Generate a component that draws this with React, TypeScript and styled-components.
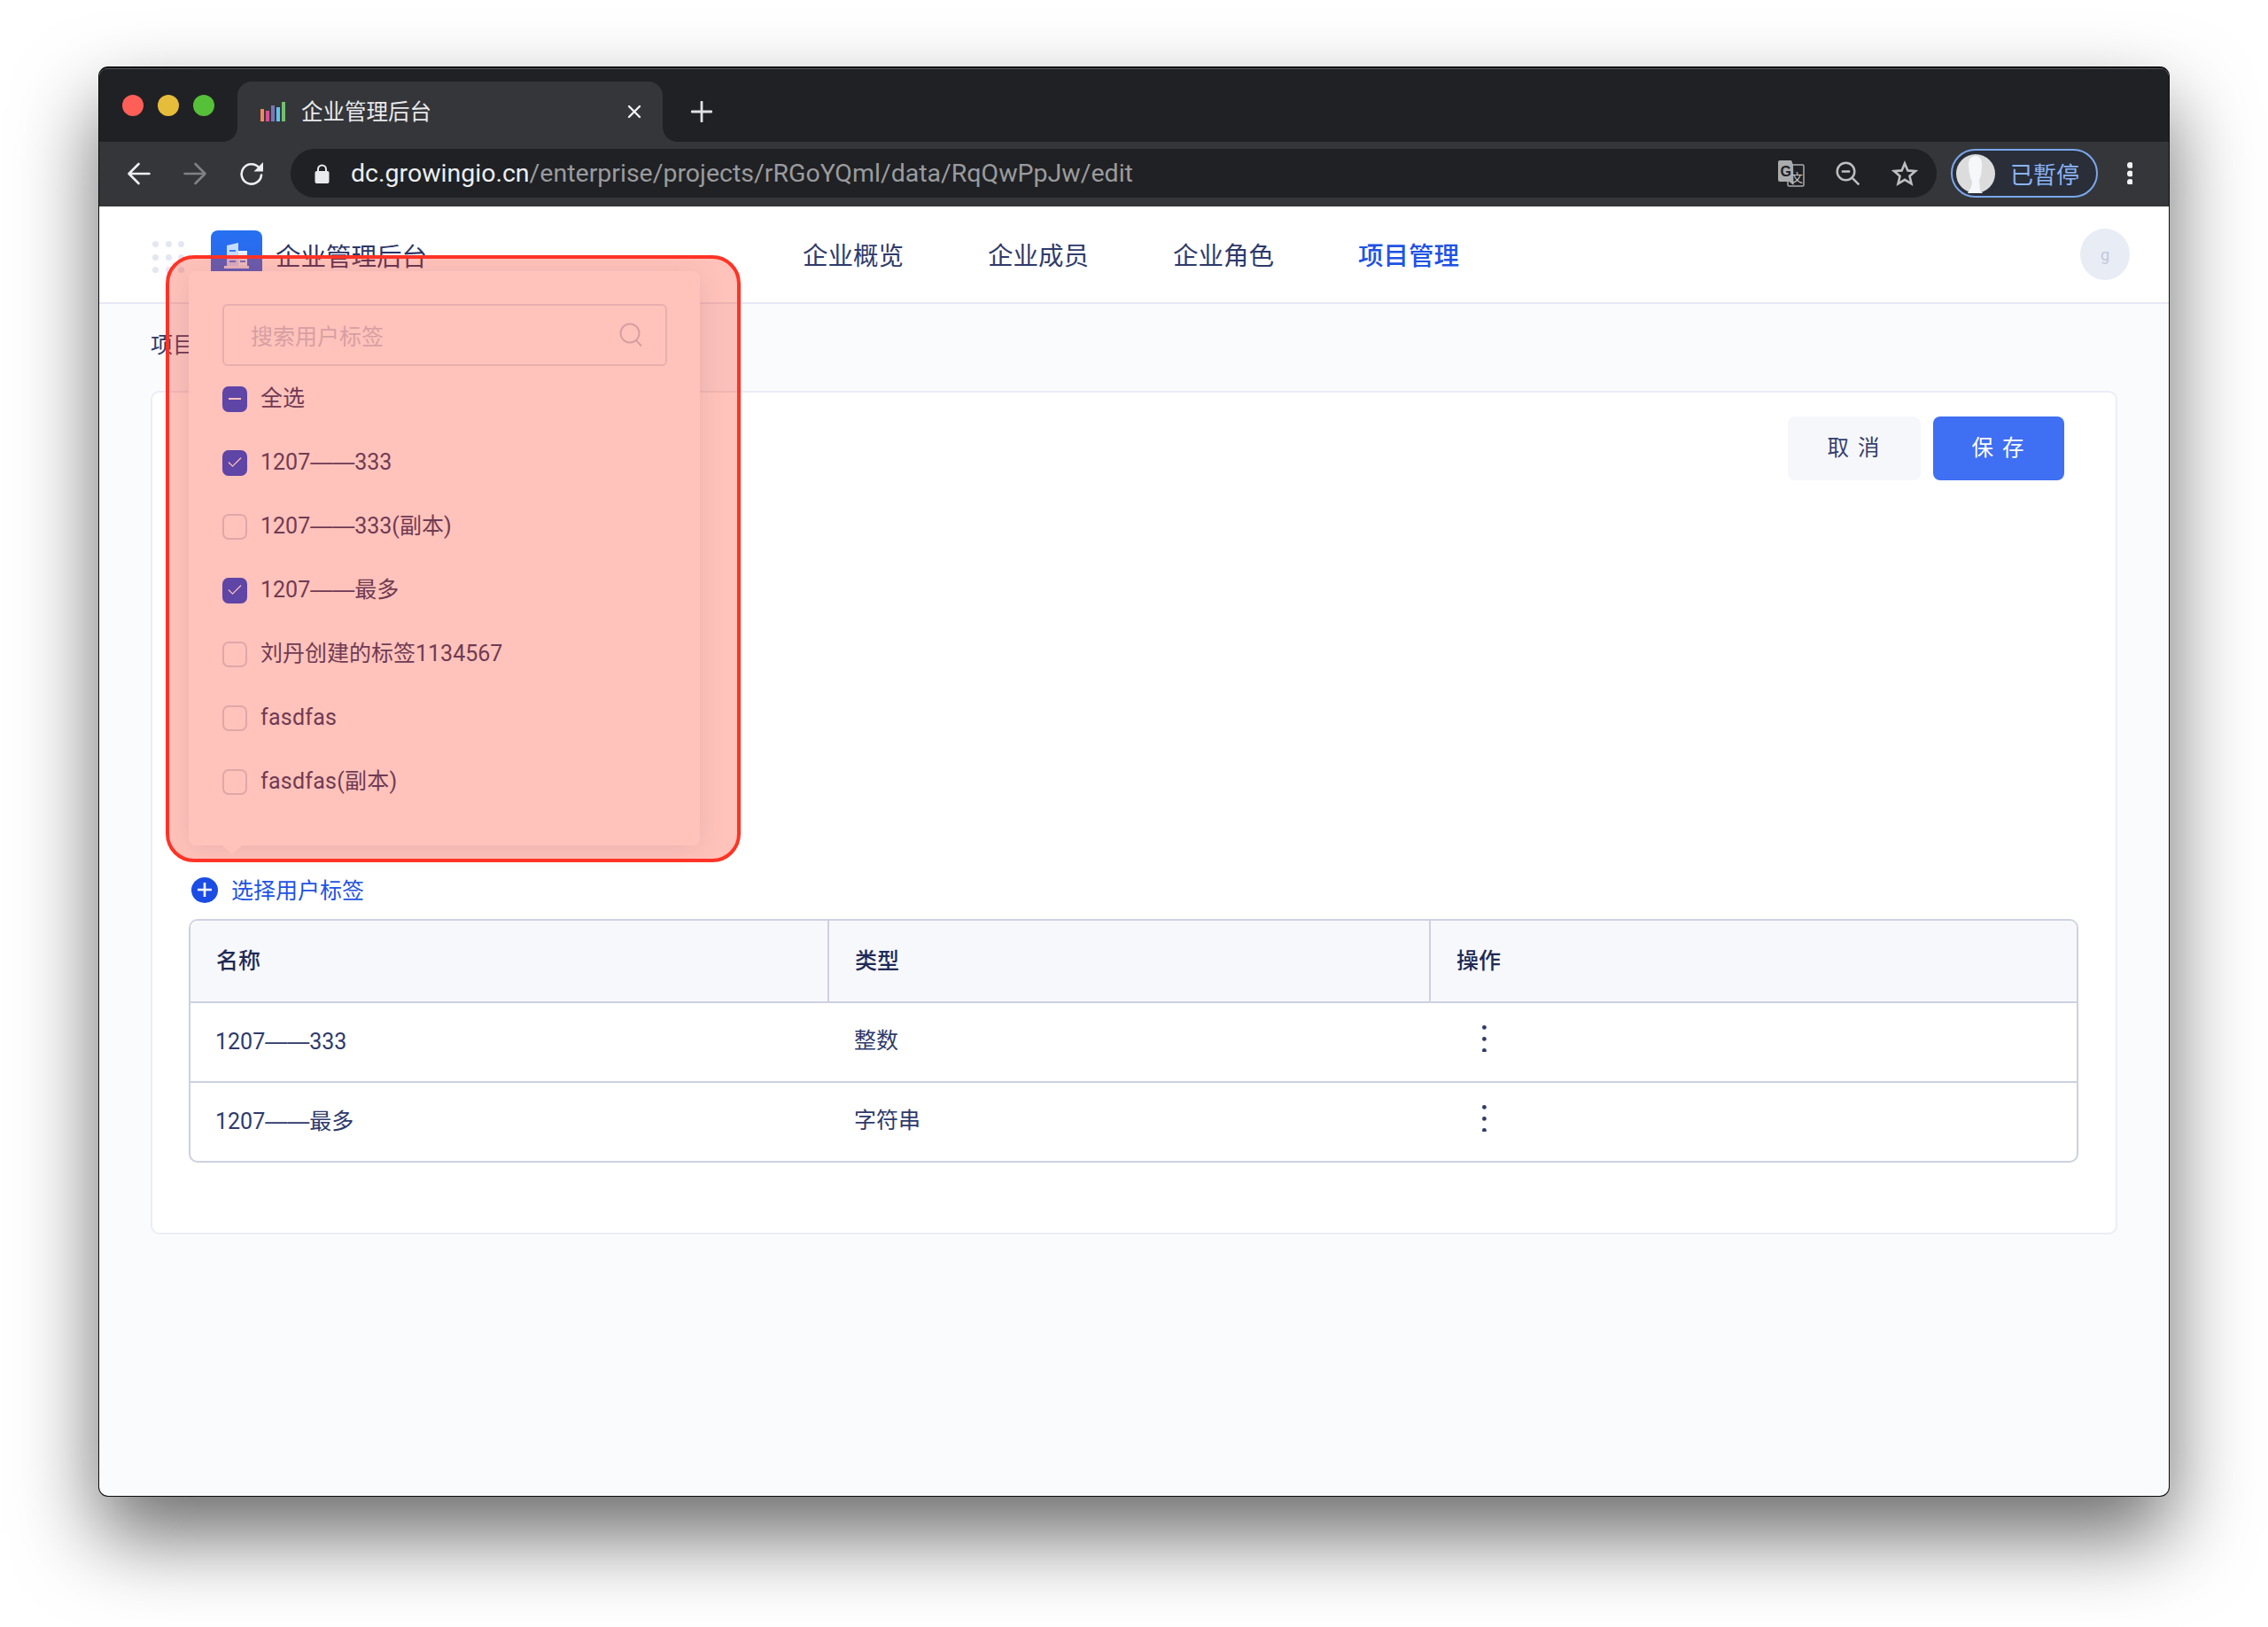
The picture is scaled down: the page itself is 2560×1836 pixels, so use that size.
import React from "react";
import styled, { createGlobalStyle } from "styled-components";
import { Check } from "lucide-react";

const CJK = '"Roboto", "Noto Sans CJK SC", sans-serif';

const Global = createGlobalStyle`
  html, body { margin: 0; padding: 0; background: #fff; }
  body { font-family: ${CJK}; }
  * { box-sizing: border-box; }
`;

const Page = styled.div`
  width: 2560px;
  height: 1836px;
  padding: 75px 111px 0;
  overflow: hidden;
`;
const Window = styled.div`
  position: relative;
  width: 2338px;
  height: 1614px;
  border: 1px solid #0c0c0e;
  border-top-width: 2px;
  border-radius: 11px;
  box-shadow: 0 44px 92px rgba(0, 0, 0, 0.58);
  display: flex;
  flex-direction: column;
  overflow: hidden;
  background: #fafbfd;
`;
const TabStrip = styled.div`
  height: 83px;
  flex: none;
  background: #202124;
  display: flex;
  align-items: flex-end;
  padding-left: 26px;
  border-top: 1px solid #55565a;
`;
const Lights = styled.div`
  align-self: flex-start;
  margin-top: 29px;
  display: flex;
  gap: 16px;
`;
const Light = styled.span<{ $c: string }>`
  width: 24px;
  height: 24px;
  border-radius: 50%;
  background: ${(p) => p.$c};
`;
const Tab = styled.div`
  position: relative;
  margin-left: 26px;
  width: 480px;
  height: 68px;
  background: #35363a;
  border-radius: 16px 16px 0 0;
  display: flex;
  align-items: center;
  padding: 0 24px 0 26px;
  &::before, &::after {
    content: "";
    position: absolute;
    bottom: 0;
    width: 16px;
    height: 16px;
    background: radial-gradient(circle at var(--cx) 0, #202124 15.5px, #35363a 16px);
  }
  &::before { left: -16px; --cx: 0; }
  &::after { right: -16px; --cx: 16px; }
`;
const TabTitle = styled.span`
  margin: 2px 0 0 18px;
  font-size: 24.5px;
  line-height: 34px;
  color: #e8eaed;
  flex: 1;
`;
const NewTab = styled.span`
  display: flex;
  margin-left: 32px;
  align-self: center;
  margin-bottom: -14px;
`;
const Toolbar = styled.div`
  height: 73px;
  flex: none;
  background: #35363a;
  display: flex;
  align-items: flex-start;
  padding: 8px 0 0 24px;
`;
const NavBtn = styled.span`
  width: 40px;
  height: 55px;
  display: flex;
  align-items: center;
  justify-content: center;
  margin-right: 24px;
`;
const UrlBar = styled.div`
  width: 1858px;
  height: 55px;
  border-radius: 28px;
  background: #202124;
  display: flex;
  align-items: center;
  padding-left: 27px;
`;
const UrlText = styled.div`
  margin-left: 24px;
  font-size: 28.5px;
  line-height: 40px;
  color: #9a9b9e;
  flex: 1;
  white-space: nowrap;
  & > b { color: #eceef1; font-weight: 400; }
`;
const UrlIcons = styled.div`
  display: flex;
  align-items: center;
  gap: 35px;
  padding-right: 21px;
`;
const Pill = styled.div`
  margin-left: 16px;
  width: 166px;
  height: 55px;
  border: 2px solid #7ba7ec;
  border-radius: 28px;
  background: #292e39;
  display: flex;
  align-items: center;
  padding-left: 4px;
`;
const PillText = styled.span`
  margin-left: 17px;
  font-family: "Noto Sans CJK TC", sans-serif;
  font-size: 26px;
  color: #8ab4f8;
  white-space: nowrap;
`;
const Dots = styled.span`
  margin-left: 24px;
  width: 24px;
  height: 55px;
  display: flex;
  align-items: center;
  justify-content: center;
`;
const AppHeader = styled.header`
  height: 110px;
  flex: none;
  background: #fff;
  border-bottom: 2px solid #e6e8f4;
  display: flex;
  align-items: center;
  padding: 0 44px 0 60px;
`;
const GridIcon = styled.div`
  display: grid;
  grid-template-columns: repeat(3, 7px);
  gap: 7.5px;
  margin-top: 6px;
`;
const GridDot = styled.span`
  width: 7px;
  height: 7px;
  border-radius: 50%;
  background: #e4e7f2;
`;
const Logo = styled.div`
  margin: 4px 0 0 30px;
  width: 58px;
  height: 58px;
  border-radius: 8px;
  background: linear-gradient(#2770f2, #2a66e6);
  display: flex;
  align-items: flex-end;
  justify-content: center;
  padding-bottom: 15px;
`;
const Brand = styled.div`
  margin-left: 15px;
  font-size: 28.5px;
  color: #2b3668;
  white-space: nowrap;
`;
const Nav = styled.nav`
  margin-left: 424px;
  display: flex;
  gap: 95px;
  padding-bottom: 2px;
`;
const NavItem = styled.span<{ $active?: boolean }>`
  font-size: 28.5px;
  color: ${(p) => (p.$active ? "#1f53e4" : "#2f3a6b")};
  font-weight: ${(p) => (p.$active ? 500 : 400)};
`;
const Avatar = styled.div`
  margin-left: auto;
  width: 56px;
  height: 58px;
  border-radius: 50%;
  background: #e8ecf5;
  color: #c2c8da;
  font-size: 18px;
  display: flex;
  align-items: center;
  justify-content: center;
`;
const Main = styled.main`
  flex: 1;
  padding: 30px 58px 0;
`;
const Crumb = styled.div`
  font-size: 25px;
  line-height: 34px;
  color: #2f3a6b;
  margin-bottom: 34px;
`;
const Card = styled.section`
  height: 952px;
  background: #fff;
  border: 2px solid #eaedf6;
  border-radius: 10px;
  padding: 27px 42px 0 41px;
`;
const Actions = styled.div`
  display: flex;
  justify-content: flex-end;
  gap: 14px;
  padding-right: 16px;
`;
const Button = styled.button<{ $primary?: boolean }>`
  width: ${(p) => (p.$primary ? 148 : 150)}px;
  height: 72px;
  border: 0;
  border-radius: 8px;
  padding: 0 0 5px;
  font-family: ${CJK};
  font-size: 24.5px;
  letter-spacing: 2px;
  background: ${(p) => (p.$primary ? "#3f6ff2" : "#f6f7fb")};
  color: ${(p) => (p.$primary ? "#fff" : "#34406f")};
`;
const AddRow = styled.div`
  margin-top: 446px;
  height: 34px;
  padding: 0 0 2px 3px;
  display: flex;
  align-items: center;
  gap: 15px;
  font-size: 25px;
  color: #1f53e4;
`;
const AddLabel = styled.span`
  margin-bottom: 2px;
`;
const AddIcon = styled.span`
  width: 30px;
  height: 29px;
  border-radius: 50%;
  background: #1b4de4;
  display: flex;
  align-items: center;
  justify-content: center;
`;
const Table = styled.div`
  margin-top: 15px;
  border: 2px solid #cdd1e0;
  border-radius: 10px;
  overflow: hidden;
  display: grid;
  grid-template-columns: 721px 679px 1fr;
`;
const HeadCell = styled.div<{ $last?: boolean }>`
  height: 93px;
  background: #f7f8fc;
  border-bottom: 2px solid #cdd1e0;
  border-right: ${(p) => (p.$last ? "0" : "2px solid #cdd1e0")};
  padding: 0 0 6px 29px;
  display: flex;
  align-items: center;
  font-size: 25px;
  font-weight: 500;
  color: #1f2a55;
`;
const Cell = styled.div<{ $end?: boolean }>`
  height: ${(p) => (p.$end ? 88 : 90)}px;
  border-bottom: ${(p) => (p.$end ? "0" : "2px solid #cdd1e0")};
  padding: 0 0 2px 28px;
  display: flex;
  align-items: center;
  font-size: 25px;
  line-height: 34px;
  color: #2f3a6b;
`;
const WideDash = styled.span`
  font-family: "Liberation Sans", sans-serif;
`;
const Kebab = styled.span`
  display: flex;
  margin: 0 0 6px 30px;
`;
const Popover = styled.div`
  position: absolute;
  left: 101px;
  top: 229px;
  width: 577px;
  height: 648px;
  background: #fff;
  border-radius: 8px;
  box-shadow: 0 3px 30px rgba(40, 50, 90, 0.13);
  padding: 37px 37px 0 38px;
  &::after {
    content: "";
    position: absolute;
    left: 38px;
    bottom: -10px;
    width: 0;
    height: 0;
    border-left: 11px solid transparent;
    border-right: 11px solid transparent;
    border-top: 10px solid #fff;
  }
`;
const SearchBox = styled.div`
  height: 70px;
  border: 2px solid #dfe2ee;
  border-radius: 6px;
  display: flex;
  align-items: center;
  justify-content: space-between;
  padding: 0 26px 0 30px;
  font-size: 25px;
  color: #c6cbdc;
`;
const OptionList = styled.div`
  margin-top: 1px;
`;
const OptionRow = styled.div`
  height: 72px;
  display: flex;
  align-items: center;
  gap: 15px;
  font-size: 25px;
  line-height: 34px;
  color: #2f3a6b;
`;
const OptionLabel = styled.span<{ $latin?: boolean }>`
  margin-bottom: 1px;
  letter-spacing: ${(p) => (p.$latin ? "0.25px" : "0")};
`;
const Box = styled.span<{ $on?: boolean }>`
  width: 28px;
  height: 29px;
  border-radius: 7px;
  border: 2px solid ${(p) => (p.$on ? "#1649e1" : "#d3d7e4")};
  background: ${(p) => (p.$on ? "#1649e1" : "#fff")};
  display: flex;
  align-items: center;
  justify-content: center;
  color: #fff;
`;
const Dash = styled.span`
  width: 14px;
  height: 2.5px;
  background: #fff;
`;
const Highlight = styled.div`
  position: absolute;
  left: 75px;
  top: 211px;
  width: 649px;
  height: 685px;
  border: 4px solid #ff3326;
  border-radius: 32px;
  background: rgba(255, 62, 34, 0.31);
`;

const Favicon = () => (
  <svg width="28" height="22" viewBox="0 0 28 22">
    <rect x="0" y="8" width="4" height="14" fill="#f2885a" />
    <rect x="6" y="10" width="4" height="12" fill="#d94e98" />
    <rect x="12" y="4" width="4" height="18" fill="#7c75b8" />
    <rect x="18" y="6" width="4" height="16" fill="#5bc4ec" />
    <rect x="24" y="0" width="4" height="22" fill="#74bf6e" />
  </svg>
);
const Arrow = ({ flip, color }: { flip?: boolean; color: string }) => (
  <svg width="27" height="26" viewBox="0 0 27 26" style={flip ? { transform: "scaleX(-1)" } : undefined}>
    <path d="M25.5 13H3M13.5 2 2.5 13l11 11" fill="none" stroke={color} strokeWidth="2.6" strokeLinecap="round" strokeLinejoin="round" />
  </svg>
);
const Reload = () => (
  <svg width="28" height="27" viewBox="0 0 28 27">
    <path d="M22.6 7.4A11.2 11.2 0 1 0 25 15.5" fill="none" stroke="#eceef1" strokeWidth="2.6" strokeLinecap="round" />
    <path d="M27 1v10.5H16.5z" fill="#eceef1" />
  </svg>
);
const LockIcon = () => (
  <svg width="17" height="22" viewBox="0 0 17 22">
    <path d="M4 9V6a4.5 4.5 0 0 1 9 0v3" fill="none" stroke="#e8eaed" strokeWidth="2" />
    <rect x="0.5" y="8" width="16" height="14" rx="2" fill="#e8eaed" />
  </svg>
);
const Translate = () => (
  <svg width="30" height="30" viewBox="0 0 30 30">
    <rect x="11" y="5" width="18" height="24" rx="1.5" fill="#202124" stroke="#a9abad" strokeWidth="1.5" />
    <path d="M2 0h13l2 5 .5 23-5-4H2a2 2 0 0 1-2-2V2a2 2 0 0 1 2-2z" fill="#a9abad" />
    <text x="2.5" y="18" fontFamily="Liberation Sans" fontWeight="700" fontSize="16" fill="#202124">G</text>
    <text x="15" y="24" fontFamily="Noto Sans CJK SC" fontSize="13" fill="#c8c9cb">文</text>
  </svg>
);
const ZoomOutIcon = () => (
  <svg width="28" height="28" viewBox="0 0 28 28">
    <circle cx="11.5" cy="11.5" r="9.8" fill="none" stroke="#bdbec0" strokeWidth="2.5" />
    <path d="M6.8 11.5h9.4M18.8 18.8l7.5 7.5" fill="none" stroke="#bdbec0" strokeWidth="2.6" />
  </svg>
);
const StarIcon = () => (
  <svg width="30" height="30" viewBox="0 0 30 30">
    <path d="M15 3.4l3.4 8 8.7.7-6.6 5.7 2 8.5-7.5-4.5-7.5 4.5 2-8.5-6.6-5.7 8.7-.7z" fill="none" stroke="#bdbec0" strokeWidth="2.6" strokeLinejoin="miter" />
  </svg>
);
const ProfileFace = () => (
  <svg width="44" height="46" viewBox="0 0 44 46">
    <circle cx="22" cy="23" r="22" fill="#dcdcdc" />
    <path d="M14 12c0-6 4-9 8-9s7 3 7 9c0 8-1 15-3 18l1 12 3 3H13c3-5 5-8 5-13-3-6-4-14-4-20z" fill="#f5f7fa" />
  </svg>
);
const Building = () => (
  <svg width="28" height="29" viewBox="0 0 28 29">
    <path d="M3 3l13-3v27H3z" fill="#c6dcff" />
    <path d="M16 9h10v18H16z" fill="#e9f0ff" />
    <path d="M0 26h28v3H0z" fill="#dfe9ff" />
    <path d="M6 8h7v2H6zM6 14h7v2H6zM6 20h7v2H6zM18 14h6v2h-6zM18 20h6v2h-6z" fill="#3f7cf0" />
  </svg>
);
const SearchIcon = () => (
  <svg width="26" height="28" viewBox="0 0 26 28">
    <circle cx="12" cy="12" r="10.5" fill="none" stroke="#c6cbdc" strokeWidth="2" />
    <path d="M19.5 20.5l5.5 6" fill="none" stroke="#c6cbdc" strokeWidth="2" />
  </svg>
);
const VDots = ({ r, gap, color }: { r: number; gap: number; color: string }) => (
  <svg width={r * 2} height={gap * 2 + r * 2} viewBox={`0 0 ${r * 2} ${gap * 2 + r * 2}`}>
    {[0, 1, 2].map((i) => (
      <circle key={i} cx={r} cy={r + i * gap} r={r} fill={color} />
    ))}
  </svg>
);

// The two-em dashes need a face whose em dash fills the full em.
const Named = ({ text }: { text: string }) => {
  const parts = text.split("——");
  if (parts.length === 1) return <>{text}</>;
  return (
    <>
      {parts[0]}
      <WideDash>——</WideDash>
      {parts[1]}
    </>
  );
};

const options: { label: string; state?: "on" | "mixed"; latin?: boolean }[] = [
  { label: "全选", state: "mixed" },
  { label: "1207——333", state: "on" },
  { label: "1207——333(副本)" },
  { label: "1207——最多", state: "on" },
  { label: "刘丹创建的标签1134567" },
  { label: "fasdfas", latin: true },
  { label: "fasdfas(副本)", latin: true },
];
const rows = [
  { name: "1207——333", type: "整数" },
  { name: "1207——最多", type: "字符串" },
];

export default function App() {
  return (
    <Page>
      <Global />
      <Window>
        <TabStrip>
          <Lights>
            <Light $c="#ff5f57" />
            <Light $c="#e5bd3b" />
            <Light $c="#56c038" />
          </Lights>
          <Tab>
            <Favicon />
            <TabTitle>企业管理后台</TabTitle>
            <svg width="16" height="16" viewBox="0 0 16 16">
              <path d="M2 2l12 12M14 2 2 14" stroke="#f1f3f4" strokeWidth="2.4" strokeLinecap="round" />
            </svg>
          </Tab>
          <NewTab>
            <svg width="24" height="24" viewBox="0 0 24 24">
              <path d="M12 1v22M1 12h22" stroke="#dfe1e5" strokeWidth="2.8" strokeLinecap="round" />
            </svg>
          </NewTab>
        </TabStrip>
        <Toolbar>
          <NavBtn><Arrow color="#eceef1" /></NavBtn>
          <NavBtn><Arrow flip color="#808184" /></NavBtn>
          <NavBtn><Reload /></NavBtn>
          <UrlBar>
            <LockIcon />
            <UrlText><b>dc.growingio.cn</b>/enterprise/projects/rRGoYQml/data/RqQwPpJw/edit</UrlText>
            <UrlIcons>
              <Translate />
              <ZoomOutIcon />
              <StarIcon />
            </UrlIcons>
          </UrlBar>
          <Pill>
            <ProfileFace />
            <PillText>已暫停</PillText>
          </Pill>
          <Dots><VDots r={3.4} gap={9.5} color="#f1f3f4" /></Dots>
        </Toolbar>
        <AppHeader>
          <GridIcon>
            {Array.from({ length: 9 }).map((_, i) => <GridDot key={i} />)}
          </GridIcon>
          <Logo><Building /></Logo>
          <Brand>企业管理后台</Brand>
          <Nav>
            <NavItem>企业概览</NavItem>
            <NavItem>企业成员</NavItem>
            <NavItem>企业角色</NavItem>
            <NavItem $active>项目管理</NavItem>
          </Nav>
          <Avatar>g</Avatar>
        </AppHeader>
        <Main>
          <Crumb>项目</Crumb>
          <Card>
            <Actions>
              <Button>取 消</Button>
              <Button $primary>保 存</Button>
            </Actions>
            <AddRow>
              <AddIcon>
                <svg width="18" height="18" viewBox="0 0 18 18">
                  <path d="M9 1v16M1 9h16" stroke="#fff" strokeWidth="2.6" />
                </svg>
              </AddIcon>
              <AddLabel>选择用户标签</AddLabel>
            </AddRow>
            <Table>
              <HeadCell>名称</HeadCell>
              <HeadCell>类型</HeadCell>
              <HeadCell $last>操作</HeadCell>
              {rows.map((r, i) => {
                const end = i === rows.length - 1;
                return (
                  <React.Fragment key={r.name}>
                    <Cell $end={end}><span><Named text={r.name} /></span></Cell>
                    <Cell $end={end}>{r.type}</Cell>
                    <Cell $end={end}>
                      <Kebab><VDots r={2.4} gap={13} color="#2f3a6b" /></Kebab>
                    </Cell>
                  </React.Fragment>
                );
              })}
            </Table>
          </Card>
        </Main>
        <Popover>
          <SearchBox>
            搜索用户标签
            <SearchIcon />
          </SearchBox>
          <OptionList>
            {options.map((o) => (
              <OptionRow key={o.label}>
                <Box $on={!!o.state}>
                  {o.state === "on" && <Check size={20} strokeWidth={1.5} />}
                  {o.state === "mixed" && <Dash />}
                </Box>
                <OptionLabel $latin={o.latin}><Named text={o.label} /></OptionLabel>
              </OptionRow>
            ))}
          </OptionList>
        </Popover>
        <Highlight />
      </Window>
    </Page>
  );
}
